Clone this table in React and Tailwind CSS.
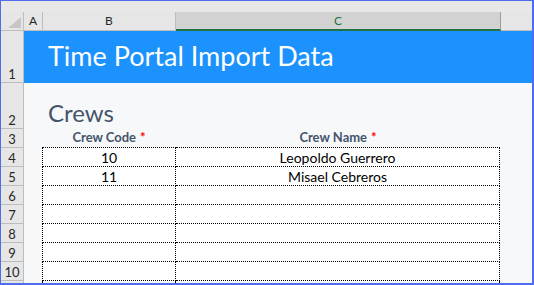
import React from 'react';

const rows = [
  { n: 4, code: '10', name: 'Leopoldo Guerrero' },
  { n: 5, code: '11', name: 'Misael Cebreros' },
  { n: 6, code: '', name: '' },
  { n: 7, code: '', name: '' },
  { n: 8, code: '', name: '' },
  { n: 9, code: '', name: '' },
  { n: 10, code: '', name: '' },
];

const RowHead = ({ children, h }) => (
  <div className={`w-[23px] shrink-0 ${h} border-r border-b border-[#bdbdbd] bg-[#e6e6e6] flex items-end justify-center pb-[1px] text-[13px] leading-none text-[#262626]`}>
    {children}
  </div>
);

export default function App() {
  return (
    <div className="w-[534px] h-[285px] overflow-hidden border-t border-l border-r-2 border-b-2 border-[#4d6cf0] bg-[#f7f8fa] flex flex-col font-['Lato','Liberation_Sans',sans-serif]">
      {/* top strip */}
      <div className="h-[11px] shrink-0 bg-[#e8e8e8]"></div>

      {/* column headers */}
      <div className="h-[19px] shrink-0 flex bg-[#e6e6e6] text-[12px] text-[#262626]">
        <div className="w-[23px] shrink-0 border-r border-b border-[#bdbdbd] relative">
          <svg className="absolute left-[7px] top-[5px]" width="13" height="11" viewBox="0 0 13 11">
            <polygon points="13,0 13,11 0,11" fill="#c6c6c6" />
          </svg>
        </div>
        <div className="w-[19px] shrink-0 border-r border-b border-[#bdbdbd] flex items-center justify-center">A</div>
        <div className="w-[133px] shrink-0 border-r border-b border-[#bdbdbd] flex items-center justify-center">B</div>
        <div className="w-[325px] shrink-0 bg-[#d2d2d2] border-r border-r-[#9e9e9e] border-b-2 border-b-[#217346] flex items-center justify-center text-[#217346]">C</div>
        <div className="flex-1 border-b border-[#bdbdbd]"></div>
      </div>

      {/* row 1: banner */}
      <div className="h-[52px] shrink-0 flex">
        <RowHead h="h-[52px]">1</RowHead>
        <div className="flex-1 bg-[#1b92fd] flex items-center pl-[24px] pb-[3px] text-white text-[27px] leading-none">
          Time Portal Import Data
        </div>
      </div>

      {/* row 2: section title */}
      <div className="h-[46px] shrink-0 flex">
        <RowHead h="h-[46px]">2</RowHead>
        <div className="flex-1 flex items-end pl-[24px] pb-[4px] text-[24px] leading-none text-[#44546a]">
          Crews
        </div>
      </div>

      {/* row 3: column labels */}
      <div className="h-[19px] shrink-0 flex">
        <RowHead h="h-[19px]">3</RowHead>
        <div className="w-[18px] shrink-0"></div>
        <div className="w-[134px] shrink-0 border-b border-dotted border-black flex items-center justify-center text-[13px] font-bold text-[#44546a]">
          Crew Code<span className="text-[#ff0000] ml-[4px]">*</span>
        </div>
        <div className="w-[324px] shrink-0 border-b border-dotted border-black flex items-center justify-center text-[13px] font-bold text-[#44546a]">
          Crew Name<span className="text-[#ff0000] ml-[4px]">*</span>
        </div>
      </div>

      {/* data rows */}
      {rows.map((r) => (
        <div key={r.n} className="h-[19px] shrink-0 flex">
          <RowHead h="h-[19px]">{r.n}</RowHead>
          <div className="w-[18px] shrink-0"></div>
          <div className="w-[134px] shrink-0 bg-white border-l border-r border-b border-dotted border-black flex items-center justify-center text-[14px] text-black">
            {r.code}
          </div>
          <div className="w-[324px] shrink-0 bg-white border-r border-b border-dotted border-black flex items-center justify-center text-[14px] text-black">
            {r.name}
          </div>
        </div>
      ))}

      {/* partial next row */}
      <div className="flex-1 flex">
        <div className="w-[23px] shrink-0 border-r border-[#bdbdbd] bg-[#e6e6e6]"></div>
        <div className="w-[18px] shrink-0"></div>
        <div className="w-[134px] shrink-0 bg-white border-l border-r border-dotted border-black"></div>
        <div className="w-[324px] shrink-0 bg-white border-r border-dotted border-black"></div>
      </div>
    </div>
  );
}
